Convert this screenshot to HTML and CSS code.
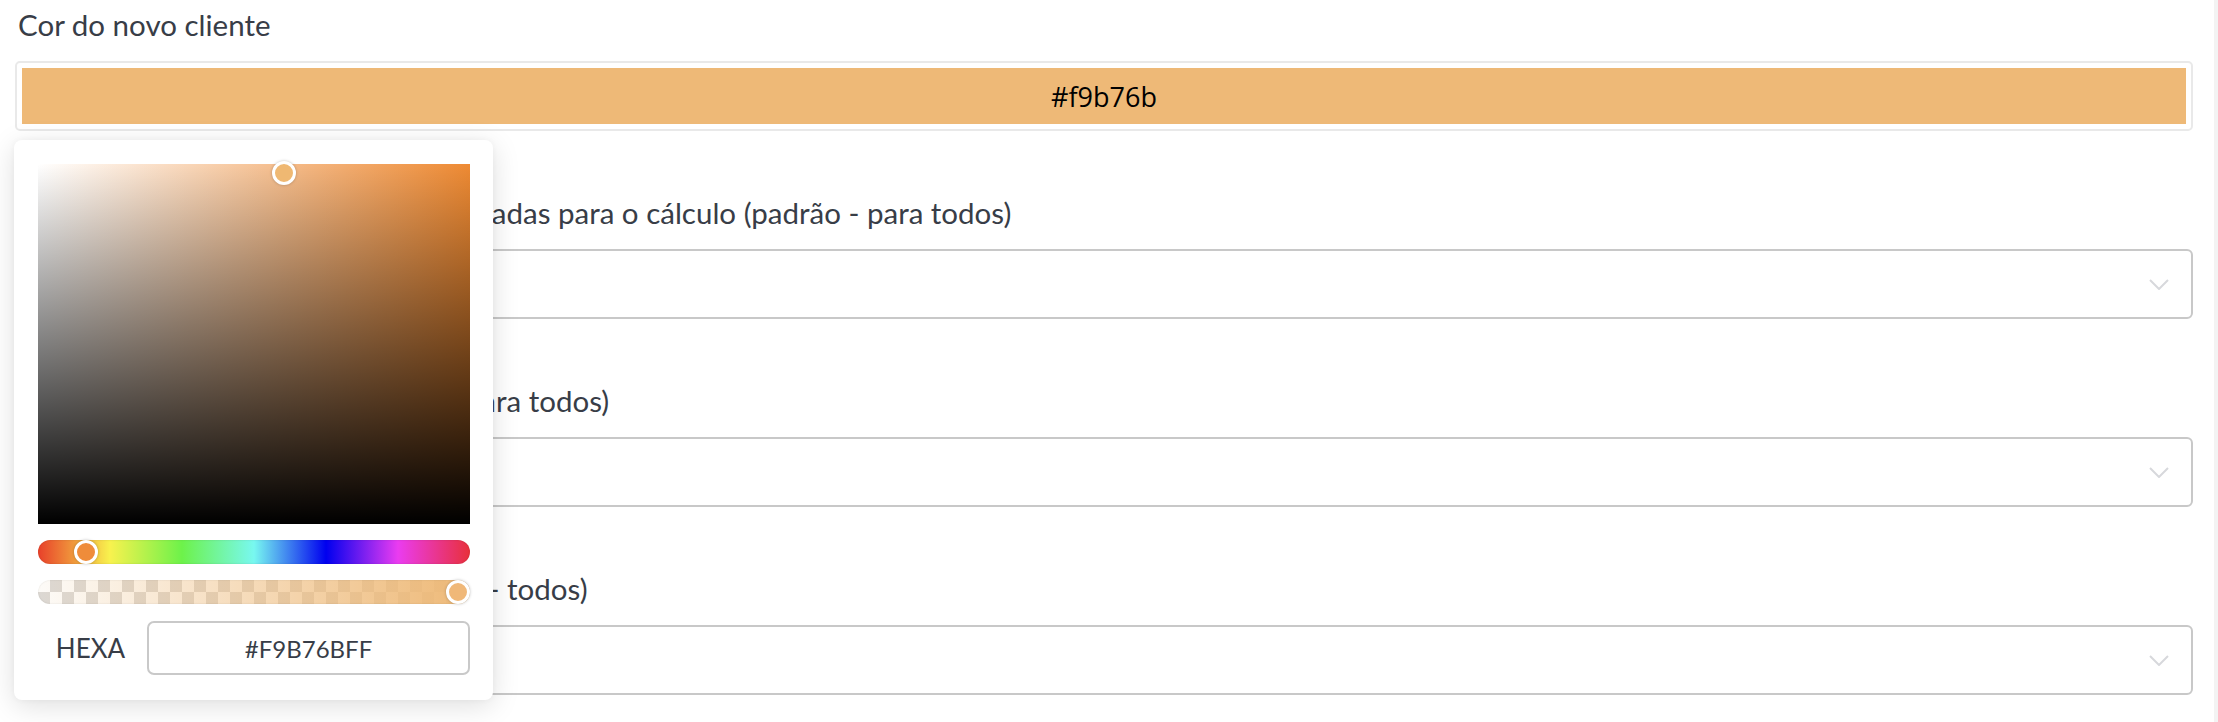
FILE: index.html
```html
<!DOCTYPE html>
<html lang="pt-BR">
<head>
<meta charset="utf-8">
<title>Cor do novo cliente</title>
<link rel="stylesheet" href="styles.css">
</head>
<body>
<div class="layout">
  <main class="form">
    <div class="field">
      <label class="field-label">Cor do novo cliente</label>
      <div class="swatch-wrap">
        <div class="swatch-box">
          <div class="swatch-fill">#f9b76b</div>
        </div>
        <div class="picker">
          <div class="sat-area">
            <span class="thumb sat-thumb"></span>
          </div>
          <div class="hue-bar">
            <span class="thumb hue-thumb"></span>
          </div>
          <div class="alpha-bar">
            <span class="thumb alpha-thumb"></span>
          </div>
          <div class="hex-row">
            <span class="hex-label">HEXA</span>
            <div class="hex-input">#F9B76BFF</div>
          </div>
        </div>
      </div>
    </div>

    <div class="field">
      <label class="field-label">Etapas de vendas que serão consideradas para o cálculo (padrão - para todos)</label>
      <div class="select">
        <svg class="chevron" width="20" height="11" viewBox="0 0 20 11"><polyline points="1,1 10,10 19,1" fill="none" stroke="#d7d8dc" stroke-width="2"/></svg>
      </div>
    </div>

    <div class="field">
      <label class="field-label">Corretores considerados (padrão - para todos)</label>
      <div class="select">
        <svg class="chevron" width="20" height="11" viewBox="0 0 20 11"><polyline points="1,1 10,10 19,1" fill="none" stroke="#d7d8dc" stroke-width="2"/></svg>
      </div>
    </div>

    <div class="field">
      <label class="field-label">Responsáveis considerados (padrão&nbsp; - todos)</label>
      <div class="select">
        <svg class="chevron" width="20" height="11" viewBox="0 0 20 11"><polyline points="1,1 10,10 19,1" fill="none" stroke="#d7d8dc" stroke-width="2"/></svg>
      </div>
    </div>
  </main>
  <div class="scroll-track"></div>
</div>
</body>
</html>
```

FILE: styles.css
```css
html, body {
  margin: 0;
  padding: 0;
  background: #ffffff;
}

body {
  font-family: "Lato", "Open Sans", sans-serif;
  color: #383d47;
}

.layout {
  display: flex;
  height: 722px;
  overflow: hidden;
}

.form {
  flex: 1;
  padding: 7px 21px 0 15px;
}

.scroll-track {
  width: 4px;
  background: #f3f3f3;
}

.field {
  display: flex;
  flex-direction: column;
  gap: 18px;
  margin-bottom: 64px;
}

.field-label {
  font-size: 29.5px;
  line-height: 36px;
  padding-left: 3px;
  white-space: nowrap;
  color: #383d47;
}

.swatch-wrap {
  position: relative;
}

.swatch-box {
  height: 70px;
  box-sizing: border-box;
  border: 2px solid #e9e9e9;
  border-radius: 5px;
  padding: 5px;
  display: flex;
}

.swatch-fill {
  flex: 1;
  background: #eeb977;
  display: flex;
  align-items: center;
  justify-content: center;
  font-family: "Open Sans", "Lato", sans-serif;
  font-size: 27px;
  color: #000000;
}

.picker {
  position: absolute;
  left: -1px;
  top: 79px;
  width: 479px;
  box-sizing: border-box;
  padding: 24px 23px 25px 24px;
  background: #ffffff;
  border-radius: 8px;
  box-shadow: 0 6px 28px rgba(0, 0, 0, 0.13), 0 0 6px rgba(0, 0, 0, 0.04);
  display: flex;
  flex-direction: column;
  z-index: 10;
}

.sat-area {
  position: relative;
  height: 360px;
  background:
    linear-gradient(to top, #000000, rgba(0, 0, 0, 0)),
    linear-gradient(to right, #ffffff, #ee8a33);
}

.thumb {
  position: absolute;
  width: 24px;
  height: 24px;
  box-sizing: border-box;
  border: 3px solid #ffffff;
  border-radius: 50%;
  box-shadow: 0 0 3px rgba(0, 0, 0, 0.25);
}

.sat-thumb {
  left: 234px;
  top: -3px;
  background: #efb872;
}

.hue-bar {
  position: relative;
  margin-top: 16px;
  height: 24px;
  border-radius: 12px;
  background: linear-gradient(to right,
    #e8402a 0%,
    #f8f24e 16.67%,
    #6df24a 33.33%,
    #78f8f0 50%,
    #0000ef 66.67%,
    #ea3cf0 83.33%,
    #e8303a 100%);
  box-shadow: inset 0 0 2px rgba(0, 0, 0, 0.15);
}

.hue-thumb {
  left: 36px;
  top: 0;
  background: #ef8c3a;
}

.alpha-bar {
  position: relative;
  margin-top: 16px;
  height: 24px;
  border-radius: 12px;
  background:
    linear-gradient(to right, rgba(238, 185, 119, 0), #eeb977),
    repeating-conic-gradient(#dcd8d3 0 25%, #fdfbf8 0 50%) 0 0 / 24px 24px;
  box-shadow: inset 0 0 2px rgba(0, 0, 0, 0.12);
}

.alpha-thumb {
  right: 0;
  top: 0;
  background: #f0b878;
}

.hex-row {
  margin-top: 17px;
  display: flex;
  align-items: center;
  gap: 4px;
}

.hex-label {
  width: 105px;
  text-align: center;
  font-size: 26px;
  color: #383d47;
}

.hex-input {
  flex: 1;
  height: 54px;
  box-sizing: border-box;
  border: 2px solid #c9c9c9;
  border-radius: 7px;
  display: flex;
  align-items: center;
  justify-content: center;
  font-size: 24px;
  color: #383d47;
}

.select {
  height: 70px;
  box-sizing: border-box;
  border: 2px solid #c8c8c8;
  border-radius: 6px;
  display: flex;
  align-items: center;
  justify-content: flex-end;
  padding-right: 22px;
}

.chevron {
  display: block;
}
```
